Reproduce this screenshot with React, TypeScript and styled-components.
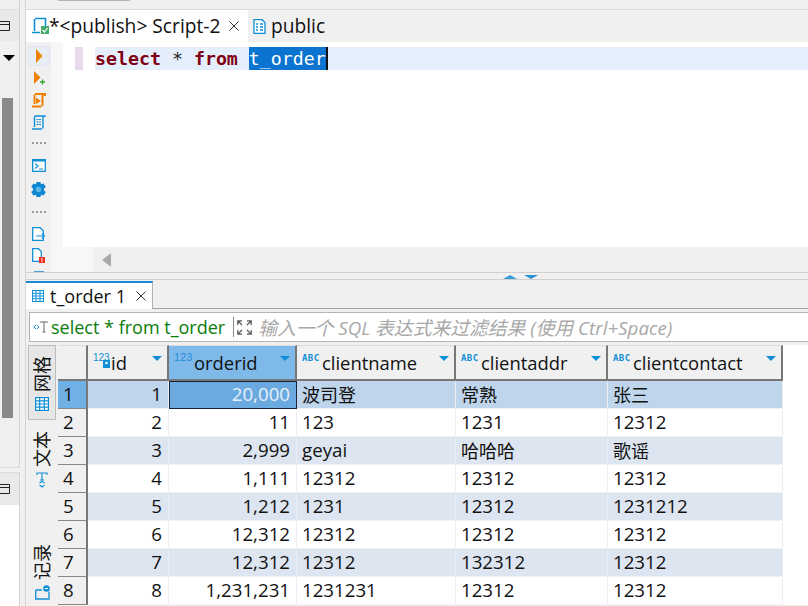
import React from "react";
import styled, { createGlobalStyle } from "styled-components";

const UI = `"Open Sans", "Noto Sans CJK SC", sans-serif`;
const BLUE = "#0f8fd6";

const Global = createGlobalStyle`
  html, body { margin: 0; padding: 0; background: #f0f0f0; }
  * { box-sizing: border-box; }
`;

const Page = styled.div`
  width: 808px; height: 606px; overflow: hidden; display: flex; position: relative;
  background: #f0f0f0; font-family: ${UI}; font-size: 18px; color: #111;
`;
const TopEdge = styled.div`position: absolute; left: 58px; top: 0; width: 72px; height: 1px; background: #b4b4b4;`;
/* left edge */
const Side = styled.aside`
  width: 26px; flex: none; display: flex; flex-direction: column;
  padding-right: 5px; border-right: 1px solid #d4d4d4; 
`;
const SideTop = styled.div`height: 10px; flex: none; border-bottom: 1px solid #dcdcdc; border-right: 1px solid #d4d4d4;`;
const SideHeader = styled.div`
  height: 31px; flex: none; background: #e9e9e9; border-right: 1px solid #d4d4d4;
  display: flex; align-items: center; overflow: hidden;
`;
const SideBody = styled.div`
  height: 427px; flex: none; border-right: 1px solid #d4d4d4; border-bottom: 1px solid #d8d8d8;
  display: flex; flex-direction: column; padding-left: 2px;
`;
const Chevron = styled.div`
  width: 0; height: 0; margin: 14px 0 0 1px; flex: none;
  border-left: 6px solid transparent; border-right: 6px solid transparent; border-top: 6px solid #000;
`;
const ScrollThumb = styled.div`width: 11px; height: 320px; margin-top: 37px; background: #8a8a8a; flex: none;`;
const SideHeaderLow = styled(SideHeader)`margin-top: 4px; height: 33px; border-top: 1px solid #dcdcdc;`;
const SideBottom = styled.div`flex: 1; background: #fff; border-right: 1px solid #d4d4d4;`;

const Main = styled.main`flex: 1; min-width: 0; display: flex; flex-direction: column;`;

/* editor tabs */
const TabBar = styled.div`
  height: 33px; margin-top: 9px; flex: none; display: flex; border-top: 1px solid #dcdcdc;
`;
const EditorTab = styled.div<{ $active?: boolean }>`
  display: flex; align-items: center; height: 32px;
  background: ${p => (p.$active ? "#fff" : "transparent")};
  width: ${p => (p.$active ? "222px" : "auto")};
  padding-left: 5px; font-size: 19.2px;
  gap: 5px; white-space: nowrap; line-height: 32px;
`;
const TabTitle = styled.span`margin-left: -6px;`;
const CloseMark = styled.svg`margin-left: 4px; flex: none;`;

const EditorArea = styled.section`height: 230px; flex: none; display: flex;`;
const ToolBar = styled.div`
  width: 25px; flex: none; display: flex; flex-direction: column; align-items: center;
  padding-top: 4px; overflow: hidden;
`;
const ToolButton = styled.div<{ $active?: boolean; $h?: number }>`
  width: 22px; height: ${p => p.$h ?? 22}px; flex: none; display: flex; align-items: center; justify-content: center;
  background: ${p => (p.$active ? "#e9eef6" : "transparent")};
  border: 1px solid ${p => (p.$active ? "#e1e7f0" : "transparent")};
  border-radius: 2px;
`;
const Dots = styled.div<{ $top: number }>`
  width: 14px; height: 2px; flex: none; margin: ${p => p.$top}px 0 10px;
  background-image: repeating-linear-gradient(90deg, #9a9a90 0 2px, transparent 2px 4px);
`;
const Ruler = styled.div`width: 12px; flex: none; background: #f7f7f7;`;
const EditorColumn = styled.div`flex: 1; min-width: 0; display: flex; flex-direction: column;`;
const EditorBody = styled.div`flex: 1; display: flex; background: #fff; padding-top: 5px;`;
const Gutter = styled.div`width: 32px; flex: none; padding-left: 12px; margin-top: -5px; padding-top: 5px;`;
const Mark = styled.div`width: 8px; height: 23px; background: #e8d9ec;`;
const CodeLine = styled.div`
  flex: 1; height: 23px; background: #e5effb; white-space: pre;
  font-family: "DejaVu Sans Mono", monospace; font-size: 18.25px; line-height: 23px; color: #222;
`;
const Keyword = styled.span`color: #7f0014; font-weight: 700;`;
const Selection = styled.span`background: #0a74d0; color: #fff; display: inline-block; height: 23px;`;
const Caret = styled.span`display: inline-block; width: 2px; height: 23px; background: #111; vertical-align: top;`;
const HScroll = styled.div`height: 25px; flex: none; display: flex; align-items: center;`;
const HScrollGap = styled.div`width: 29px; height: 100%; flex: none; background: #f7f7f7;`;
const HScrollTrack = styled.div`flex: 1; height: 100%; display: flex; align-items: center; padding-left: 9px; border-left: 1px solid #f4f4f4;`;
const ArrowLeft = styled.div`
  width: 0; height: 0; border-top: 7px solid transparent; border-bottom: 7px solid transparent; border-right: 9px solid #a8a8a8;
`;

const Sash = styled.div`
  height: 8px; flex: none; border-top: 1px solid #d0d0d0; border-bottom: 1px solid #d0d0d0;
  display: flex; align-items: center; gap: 7px; padding-left: 477px;
`;
const SashUp = styled.div`width: 0; height: 0; margin-top: 1px; border-left: 7px solid transparent; border-right: 7px solid transparent; border-bottom: 4px solid #3a9ad9;`;
const SashDown = styled.div`width: 0; height: 0; margin-top: 1px; border-left: 7px solid transparent; border-right: 7px solid transparent; border-top: 4px solid #2a90d4;`;

/* results */
const Results = styled.section`flex: 1; min-height: 0; display: flex; flex-direction: column; padding-top: 1px;`;
const ResultTabBar = styled.div`height: 28px; flex: none; display: flex; border-bottom: 1px solid #a0a0a0;`;
const ResultTab = styled.div`
  width: 127px; height: 28px; background: #fff; border-top: 2px solid #1a8bd4; border-right: 1px solid #b0b0b0;
  display: flex; align-items: center; padding-left: 6px; gap: 6px; white-space: nowrap;
`;
const FilterBar = styled.div`
  height: 30px; flex: none; margin: 3px 0 3px 3px; background: #fff; border: 1px solid #b4b4b4; border-right: 0;
  display: flex; align-items: center; padding-left: 3px; white-space: nowrap; overflow: hidden;
`;
const FilterSql = styled.span`color: #0b7d0b; margin-left: 2px;`;
const FilterSep = styled.div`width: 1px; height: 20px; background: #888; margin: 0 3px 0 8px; flex: none;`;
const Placeholder = styled.span`color: #a8a8a8; font-style: italic; margin-left: 6px; font-size: 18.8px;`;

const DataArea = styled.div`flex: 1; min-height: 0; display: flex; padding-left: 2px;`;
const ViewStrip = styled.div`width: 30px; flex: none; display: flex; flex-direction: column;`;
const ViewTab = styled.div<{ $active?: boolean; $after?: number }>`
  width: 28px; flex: none; display: flex; flex-direction: column; align-items: center;
  padding: 10px 0 8px; gap: 5px;
  margin-bottom: ${p => p.$after ?? 0}px;
  background: ${p => (p.$active ? "#e6e6e6" : "transparent")};
  border: 1px solid ${p => (p.$active ? "#bcbcbc" : "transparent")};
`;
const ViewLabel = styled.span`
  writing-mode: vertical-rl; text-orientation: sideways; transform: rotate(180deg);
  font-size: 18px; line-height: 22px; height: 36px;
`;

const Grid = styled.div`
  flex: 1; min-width: 0; align-self: flex-start; background: #fff;
  display: grid; grid-template-columns: 30px 81px 128px 159px 152px 175px 1fr;
  grid-auto-rows: 28px; grid-template-rows: 36px;
`;
const Head = styled.div<{ $active?: boolean }>`
  background: ${p => (p.$active ? "#7fb9ea" : "#f0f0f0")};
  border-right: 2px solid #777; border-bottom: 2px solid #777; border-top: 1px solid #dcdcdc;
  display: flex; align-items: flex-start; padding: 5px 0 0 5px; position: relative; white-space: nowrap;
  line-height: 24px; font-size: 18.4px;
`;
const HeadIcon = styled.svg`flex: none; margin-top: 1px;`;
const SortArrow = styled.div`
  position: absolute; right: 5px; top: 10px; width: 0; height: 0;
  border-left: 5px solid transparent; border-right: 5px solid transparent; border-top: 5px solid #0f8fd6;
`;
const Filler = styled.div`background: #fff;`;
const RowNum = styled.div<{ $sel?: boolean }>`
  background: ${p => (p.$sel ? "#6fb1e6" : "#f0f0f0")};
  border-right: 2px solid #777; border-bottom: 1px solid #888;
  padding-left: 5px; line-height: 26px; font-size: 18.7px;
`;
const Cell = styled.div<{ $bg: string; $right?: boolean; $focus?: boolean; $cjk?: boolean }>`
  background: ${p => (p.$focus ? "#6baae0" : p.$bg)};
  color: ${p => (p.$focus ? "#e6f1fb" : "#111")};
  text-align: ${p => (p.$right ? "right" : "left")};
  font-size: ${p => (p.$cjk ? "18px" : "18.7px")};
  line-height: ${p => (p.$cjk ? "28px" : "26px")};
  border-right: 1px solid #eaeef3; border-bottom: 1px solid #eef0f3;
  ${p => (p.$focus ? "outline: 1px solid #16233a; outline-offset: -1px;" : "")}
  padding: 0 6px 0 5px; white-space: nowrap; overflow: hidden;
`;

const WindowIcon = () => (
  <svg width="10" height="10" viewBox="0 0 10 10" style={{ flex: "none" }}>
    <path d="M-1 .5H9.5V9.5H-1M-1 3.5H9.5" fill="none" stroke="#222" />
  </svg>
);
const ScriptTabIcon = () => (
  <svg width="19" height="19" viewBox="0 0 19 19" style={{ flex: "none" }}>
    <path d="M4 1.5H14.5V9M3.5 2V14M1 15.5H9" fill="none" stroke={BLUE} strokeWidth="1.6" />
    <rect x="10" y="9" width="8" height="8" fill="#46a86a" />
    <path d="M11.5 13l2 2 3-4" fill="none" stroke="#fff" strokeWidth="1.2" />
  </svg>
);
const ListIcon = () => (
  <svg width="13" height="15" viewBox="0 0 13 15" style={{ flex: "none" }}>
    <path d="M1 .7H9L12 3.5V14.3H1Z" fill="#fff" stroke={BLUE} strokeWidth="1.3" />
    <path d="M3 5H5M7 5H10M3 8H5M7 8H10M3 11H5M7 11H10" stroke={BLUE} strokeWidth="1.5" />
  </svg>
);
const Close = () => (
  <CloseMark width="10" height="10" viewBox="0 0 10 10">
    <path d="M.5.5l9 9M9.5.5l-9 9" stroke="#333" strokeWidth="1" />
  </CloseMark>
);
const Run = () => (
  <svg width="8" height="14" viewBox="0 0 8 14"><path d="M1 0L7.5 7L1 14Z" fill="#ef8000" /></svg>
);
const RunPlus = () => (
  <svg width="14" height="14" viewBox="0 0 14 14">
    <path d="M2 0L8.5 6.5L2 13Z" fill="#ef8000" />
    <path d="M8 11H13M10.5 8.5V13.5" stroke="#3aa63a" strokeWidth="1.4" />
  </svg>
);
const ScrollRun = () => (
  <svg width="15" height="15" viewBox="0 0 15 15">
    <path d="M3.5 1.5V11M4 1H14V3M11.5 1.5V13M1 13.5H10.5" fill="none" stroke="#ef8000" strokeWidth="2" />
    <path d="M5 4.5L10 8L5 11Z" fill="#ef8000" />
  </svg>
);
const ScrollDoc = () => (
  <svg width="15" height="15" viewBox="0 0 15 15">
    <path d="M3.5 1.5V12M3.5 1H14V2M12 1.5V13.5M1 14H11" fill="none" stroke={BLUE} strokeWidth="1.4" />
    <path d="M5.5 4.5H10M5.5 7H10M5.5 9.5H10" stroke={BLUE} strokeWidth="1.2" strokeDasharray="2 .6" />
  </svg>
);
const Terminal = () => (
  <svg width="14" height="13" viewBox="0 0 14 13">
    <rect x=".7" y=".7" width="12.6" height="11.6" fill="#fff" stroke={BLUE} strokeWidth="1.3" />
    <rect x="0" y="0" width="14" height="2.5" fill={BLUE} />
    <path d="M3 4.5L6 7L3 9.5M7 10H11" fill="none" stroke={BLUE} strokeWidth="1.2" />
  </svg>
);
const Gear = () => (
  <svg width="15" height="15" viewBox="0 0 15 15">
    <path d="M5.5 0H9.5L10 2.2L12.6 1.4L14.8 5L13 6.5V8.5L14.8 10L12.6 13.6L10 12.8L9.5 15H5.5L5 12.8L2.4 13.6L.2 10L2 8.5V6.5L.2 5L2.4 1.4L5 2.2Z" fill="#0f86cf" />
    <circle cx="7.5" cy="7.5" r="2.8" fill="#58b7e8" />
  </svg>
);
const DocArrow = () => (
  <svg width="13" height="14" viewBox="0 0 13 14">
    <path d="M.7.7H8L11.3 3.8V13.3H.7Z" fill="#fff" stroke={BLUE} strokeWidth="1.3" />
    <path d="M4 9H12.5M10 6.5L12.5 9L10 11.5" fill="none" stroke={BLUE} strokeWidth="1.2" />
  </svg>
);
const DocError = () => (
  <svg width="13" height="15" viewBox="0 0 13 15">
    <path d="M.7.7H6.5L9.3 3.5V13.3H.7Z" fill="#fff" stroke={BLUE} strokeWidth="1.3" />
    <rect x="7" y="9" width="6" height="6" fill="#f03020" />
    <path d="M10 10V12.5M10 13.2V14.2" stroke="#fff" strokeWidth="1" />
  </svg>
);
const ClippedBlue = styled.div`width: 10px; height: 2px; background: #4a9fd8; margin-top: 5px; flex: none;`;
const TableIcon = ({ size = 12 }: { size?: number }) => (
  <svg width={size} height={size} viewBox="0 0 12 12" style={{ flex: "none" }}>
    <rect x=".5" y=".5" width="11" height="11" fill="#fff" stroke={BLUE} />
    <path d="M.5 3.3H11.5M.5 6H11.5M.5 8.7H11.5M4 .5V11.5M8 .5V11.5" stroke={BLUE} strokeWidth="1" />
  </svg>
);
const FilterT = () => (
  <svg width="16" height="13" viewBox="0 0 16 13" style={{ flex: "none" }}>
    <path d="M3 4L.8 6L3 8M4 4L6 6L4 8" fill="none" stroke={BLUE} strokeWidth="1" />
    <path d="M7 1H15M11 1V11M9.5 11H12.5" fill="none" stroke="#666" strokeWidth="1" />
  </svg>
);
const Expand = () => (
  <svg width="15" height="15" viewBox="0 0 15 15" style={{ flex: "none" }}>
    <path d="M.8 5V.8H5M.8.8L5 5M14.2 5V.8H10M14.2.8L10 5M.8 10V14.2H5M.8 14.2L5 10M14.2 10V14.2H10M14.2 14.2L10 10" fill="none" stroke="#555" strokeWidth="1.2" />
  </svg>
);
const TextIcon = () => (
  <svg width="12" height="16" viewBox="0 0 12 16">
    <path d="M1 3V1H11V3M6 1V8M4 8H8M3.5 11L6 9.5L8.5 11M3.5 13L6 15L8.5 13" fill="none" stroke={BLUE} strokeWidth="1.1" />
  </svg>
);
const RecordIcon = () => (
  <svg width="15" height="15" viewBox="0 0 15 15">
    <path d="M.7 5V14H14V6.5M.7 5H7" fill="none" stroke={BLUE} strokeWidth="1.3" />
    <circle cx="11.5" cy="3.5" r="3.3" fill={BLUE} />
    <path d="M9.8 3.5H13.2" stroke="#fff" strokeWidth="1" />
  </svg>
);
const Num123 = ({ keyed, color = BLUE, wide }: { keyed?: boolean; color?: string; wide?: boolean }) => (
  <HeadIcon width={wide ? 20 : 18} height="17" viewBox={`0 0 ${wide ? 20 : 18} 17`}>
    <text x="0" y="9" fontFamily='"Liberation Sans", sans-serif' fontSize={wide ? 11 : 10} fill={color}>123</text>
    {keyed && <rect x="10" y="8" width="7" height="8" fill={color} />}
    {keyed && <circle cx="13.5" cy="11" r="1.3" fill="#fff" />}
  </HeadIcon>
);
const Abc = () => (
  <HeadIcon width="20" height="17" viewBox="0 0 20 17">
    <text x="0" y="9" fontFamily='"DejaVu Sans Mono", monospace' fontWeight="700" fontSize="9" letterSpacing=".4" fill={BLUE}>ABC</text>
  </HeadIcon>
);

const rows: [string, string, string, string, string][] = [
  ["1", "20,000", "波司登", "常熟", "张三"],
  ["2", "11", "123", "1231", "12312"],
  ["3", "2,999", "geyai", "哈哈哈", "歌谣"],
  ["4", "1,111", "12312", "12312", "12312"],
  ["5", "1,212", "1231", "12312", "1231212"],
  ["6", "12,312", "12312", "12312", "12312"],
  ["7", "12,312", "12312", "132312", "12312"],
  ["8", "1,231,231", "1231231", "12312", "12312"],
];
const hasCjk = (s: string) => /[^\x00-\x7f]/.test(s);

export default function App() {
  return (
    <Page>
      <Global />
      <TopEdge />
      <Side>
        <SideTop />
        <SideHeader><WindowIcon /></SideHeader>
        <SideBody>
          <Chevron />
          <ScrollThumb />
        </SideBody>
        <SideHeaderLow><WindowIcon /></SideHeaderLow>
        <SideBottom />
      </Side>
      <Main>
        <TabBar>
          <EditorTab $active>
            <ScriptTabIcon />
            <TabTitle>*&lt;publish&gt; Script-2</TabTitle>
            <Close />
          </EditorTab>
          <EditorTab>
            <ListIcon />
            <span>public</span>
          </EditorTab>
        </TabBar>
        <EditorArea>
          <ToolBar>
            <ToolButton $active $h={20}><Run /></ToolButton>
            <ToolButton $h={23}><RunPlus /></ToolButton>
            <ToolButton><ScrollRun /></ToolButton>
            <ToolButton><ScrollDoc /></ToolButton>
            <Dots $top={9} />
            <ToolButton><Terminal /></ToolButton>
            <ToolButton $h={27}><Gear /></ToolButton>
            <Dots $top={8} />
            <ToolButton><DocArrow /></ToolButton>
            <ToolButton $h={21}><DocError /></ToolButton>
            <ClippedBlue />
          </ToolBar>
          <Ruler />
          <EditorColumn>
            <EditorBody>
              <Gutter><Mark /></Gutter>
              <CodeLine>
                <Keyword>select</Keyword> * <Keyword>from</Keyword> <Selection>t_order</Selection><Caret />
              </CodeLine>
            </EditorBody>
            <HScroll>
              <HScrollGap />
              <HScrollTrack><ArrowLeft /></HScrollTrack>
            </HScroll>
          </EditorColumn>
        </EditorArea>
        <Sash><SashUp /><SashDown /></Sash>
        <Results>
          <ResultTabBar>
            <ResultTab>
              <TableIcon />
              <span>t_order 1</span>
              <Close />
            </ResultTab>
          </ResultTabBar>
          <FilterBar>
            <FilterT />
            <FilterSql>select * from t_order</FilterSql>
            <FilterSep />
            <Expand />
            <Placeholder>输入一个 SQL 表达式来过滤结果 (使用 Ctrl+Space)</Placeholder>
          </FilterBar>
          <DataArea>
            <ViewStrip>
              <ViewTab $active>
                <ViewLabel>网格</ViewLabel>
                <TableIcon size={14} />
              </ViewTab>
              <ViewTab $after={36}>
                <ViewLabel>文本</ViewLabel>
                <TextIcon />
              </ViewTab>
              <ViewTab>
                <ViewLabel>记录</ViewLabel>
                <RecordIcon />
              </ViewTab>
            </ViewStrip>
            <Grid>
              <Head />
              <Head><Num123 keyed /><span>id</span><SortArrow /></Head>
              <Head $active><Num123 wide color="#1f8fdc" /><span>orderid</span><SortArrow /></Head>
              <Head><Abc /><span>clientname</span><SortArrow /></Head>
              <Head><Abc /><span>clientaddr</span><SortArrow /></Head>
              <Head><Abc /><span>clientcontact</span><SortArrow /></Head>
              <Filler />
              {rows.map((r, i) => {
                const bg = i === 0 ? "#bed5eb" : i % 2 === 0 ? "#dce5f0" : "#fff";
                return (
                  <React.Fragment key={r[0]}>
                    <RowNum $sel={i === 0}>{r[0]}</RowNum>
                    <Cell $bg={bg} $right>{r[0]}</Cell>
                    <Cell $bg={bg} $right $focus={i === 0}>{r[1]}</Cell>
                    <Cell $bg={bg} $cjk={hasCjk(r[2])}>{r[2]}</Cell>
                    <Cell $bg={bg} $cjk={hasCjk(r[3])}>{r[3]}</Cell>
                    <Cell $bg={bg} $cjk={hasCjk(r[4])}>{r[4]}</Cell>
                    <Filler />
                  </React.Fragment>
                );
              })}
            </Grid>
          </DataArea>
        </Results>
      </Main>
    </Page>
  );
}
